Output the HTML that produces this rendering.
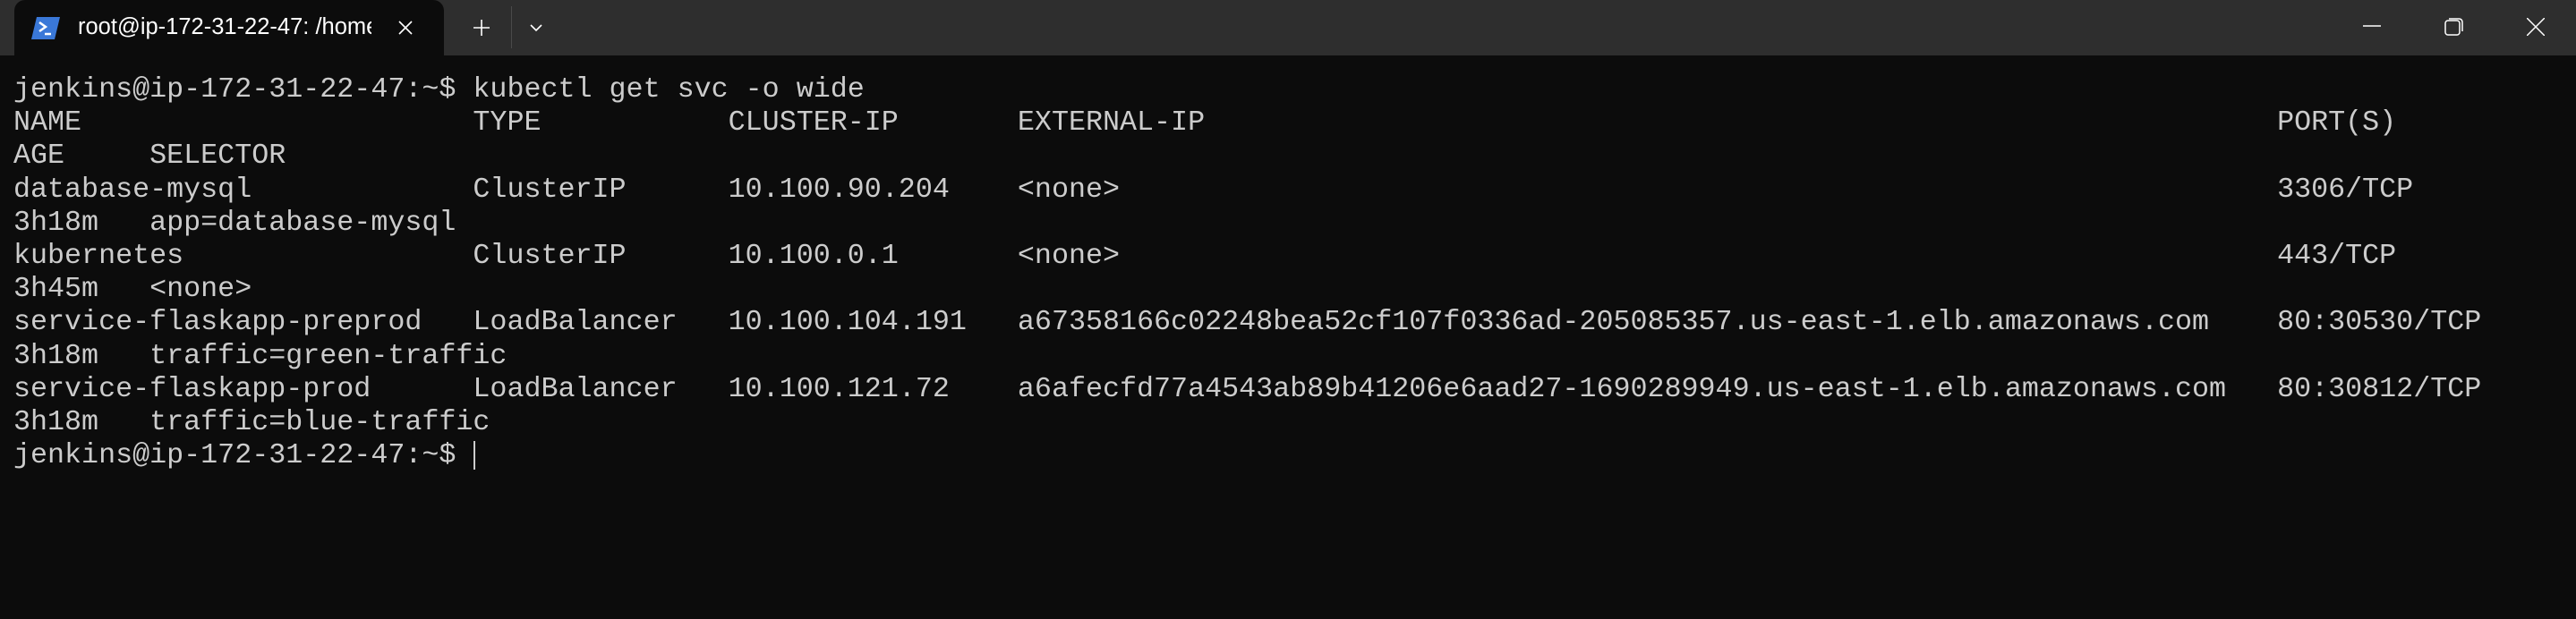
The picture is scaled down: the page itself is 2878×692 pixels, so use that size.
<!DOCTYPE html>
<html><head><meta charset="utf-8"><style>
html,body{margin:0;padding:0;width:2878px;height:692px;overflow:hidden;background:#0c0c0c;}
#bar{position:absolute;left:0;top:0;width:2878px;height:62px;background:#2e2e2e;}
#tab{position:absolute;left:16px;top:0;width:480px;height:62px;background:#0c0c0c;border-radius:12px 12px 0 0;}
#title{position:absolute;left:87px;top:16px;width:328px;overflow:hidden;white-space:nowrap;font-family:"Liberation Sans",sans-serif;font-size:25.5px;color:#fff;}
svg{position:absolute;}
pre{position:absolute;left:15px;top:82px;margin:0;font-family:"Liberation Mono","DejaVu Sans Mono",monospace;font-size:31.7px;line-height:37.2px;color:#cccccc;}
#cur{position:absolute;left:529px;top:493px;width:2px;height:32px;background:#cccccc;}
</style></head><body>
<div id="bar"></div>
<div id="tab"></div>
<svg style="left:34px;top:18px" width="34" height="27" viewBox="0 0 34 27"><polygon points="7,1 33,1 27,26 1,26" fill="#3a78d8"/><polyline points="10,7 17,12 10,17" fill="none" stroke="#fff" stroke-width="2.5"/><line x1="16" y1="20" x2="23" y2="20" stroke="#fff" stroke-width="2.5"/></svg>
<div id="title">root@ip-172-31-22-47: /home/jenkins</div>
<svg style="left:445px;top:23px" width="16" height="16"><path d="M1 1L15 15M15 1L1 15" stroke="#fff" stroke-width="1.6"/></svg>
<svg style="left:529px;top:22px" width="18" height="18"><path d="M9 0V18M0 9H18" stroke="#fff" stroke-width="1.6"/></svg>
<div style="position:absolute;left:571px;top:7px;width:1px;height:47px;background:#4a4a4a"></div>
<svg style="left:592px;top:27px" width="14" height="9"><path d="M1 1L7 7L13 1" fill="none" stroke="#fff" stroke-width="1.6"/></svg>
<svg style="left:2640px;top:28px" width="20" height="2"><path d="M0 1H20" stroke="#fff" stroke-width="1.5"/></svg>
<svg style="left:2731px;top:19px" width="22" height="22"><rect x="1" y="4" width="16" height="16" rx="3" fill="none" stroke="#fff" stroke-width="1.5"/><path d="M5 2H16Q20 2 20 6V16" fill="none" stroke="#fff" stroke-width="1.5"/></svg>
<svg style="left:2823px;top:20px" width="20" height="20"><path d="M0 0L20 20M20 0L0 20" stroke="#fff" stroke-width="1.5"/></svg>
<pre>jenkins@ip-172-31-22-47:~$ kubectl get svc -o wide
NAME                       TYPE           CLUSTER-IP       EXTERNAL-IP                                                               PORT(S)
AGE     SELECTOR
database-mysql             ClusterIP      10.100.90.204    &lt;none&gt;                                                                    3306/TCP
3h18m   app=database-mysql
kubernetes                 ClusterIP      10.100.0.1       &lt;none&gt;                                                                    443/TCP
3h45m   &lt;none&gt;
service-flaskapp-preprod   LoadBalancer   10.100.104.191   a67358166c02248bea52cf107f0336ad-205085357.us-east-1.elb.amazonaws.com    80:30530/TCP
3h18m   traffic=green-traffic
service-flaskapp-prod      LoadBalancer   10.100.121.72    a6afecfd77a4543ab89b41206e6aad27-1690289949.us-east-1.elb.amazonaws.com   80:30812/TCP
3h18m   traffic=blue-traffic
jenkins@ip-172-31-22-47:~$ </pre>
<div id="cur"></div>
</body></html>
